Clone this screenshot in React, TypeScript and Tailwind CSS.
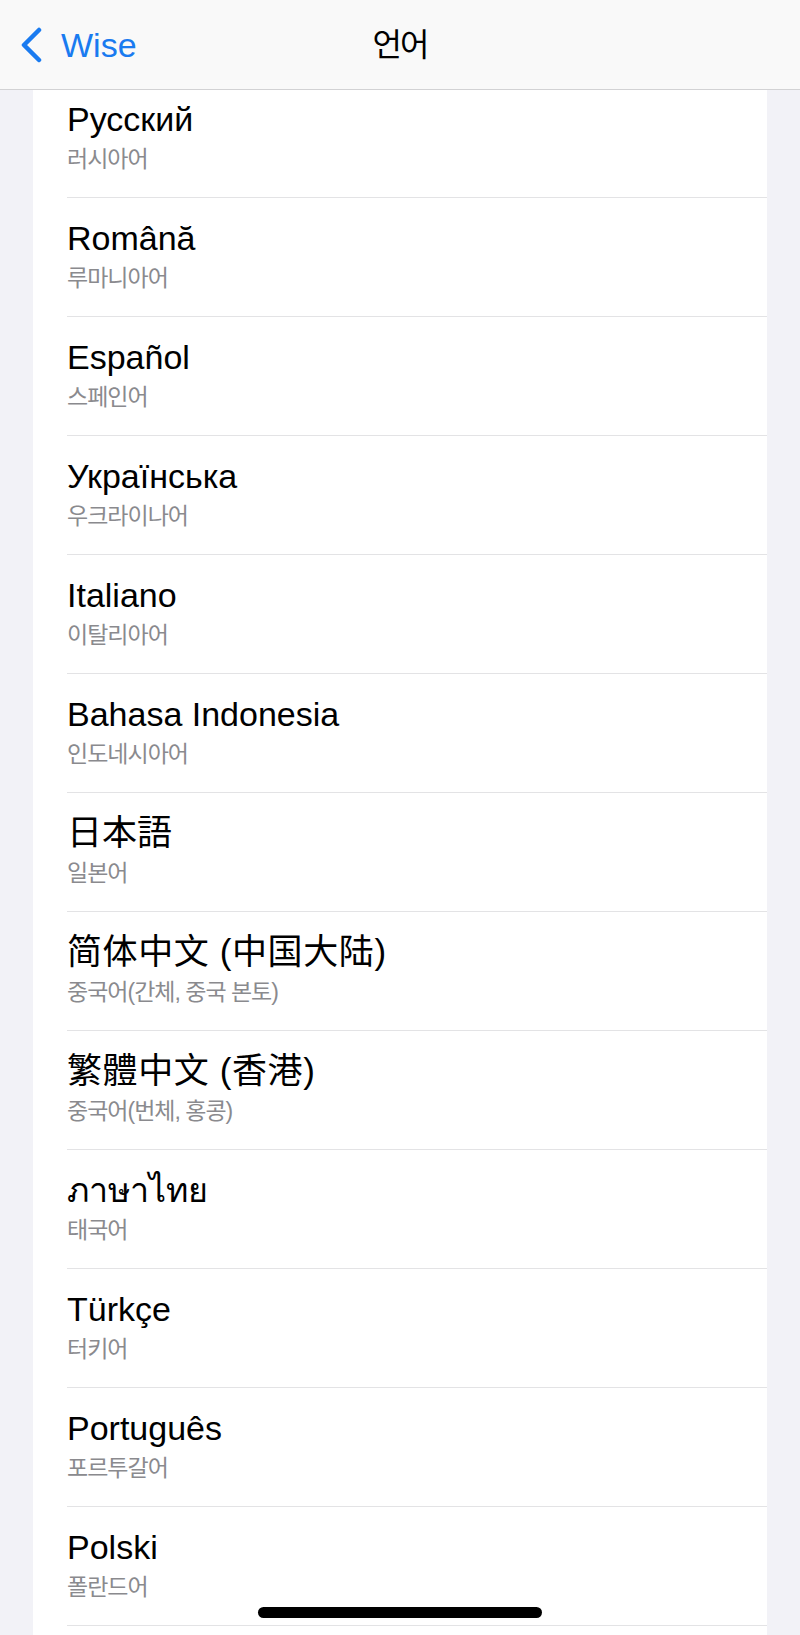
import React from "react";

const LANGUAGES = [
  { name: "Русский", label: "러시아어" },
  { name: "Română", label: "루마니아어" },
  { name: "Español", label: "스페인어" },
  { name: "Українська", label: "우크라이나어" },
  { name: "Italiano", label: "이탈리아어" },
  { name: "Bahasa Indonesia", label: "인도네시아어" },
  { name: "日本語", label: "일본어", cjk: "jp" },
  { name: "简体中文 (中国大陆)", label: "중국어(간체, 중국 본토)", cjk: "sc" },
  { name: "繁體中文 (香港)", label: "중국어(번체, 홍콩)", cjk: "tc" },
  { name: "ภาษาไทย", label: "태국어" },
  { name: "Türkçe", label: "터키어" },
  { name: "Português", label: "포르투갈어" },
  { name: "Polski", label: "폴란드어" },
  { name: "", label: "" },
];

const titleFont: Record<string, string> = {
  jp: "font-['Liberation_Sans','Noto_Sans_CJK_JP',sans-serif] text-[35px]",
  sc: "font-['Liberation_Sans','Noto_Sans_CJK_SC',sans-serif] text-[35px] tracking-[0.6px]",
  tc: "font-['Liberation_Sans','Noto_Sans_CJK_TC',sans-serif] text-[35px] tracking-[0.6px]",
};

export default function App() {
  return (
    <div className="w-[800px] h-[1635px] bg-[#f2f2f7] relative overflow-hidden font-['Liberation_Sans','Noto_Sans_CJK_KR',sans-serif]">
      {/* Nav bar */}
      <header className="h-[90px] bg-[#f9f9f9] border-b border-[#d2d2d4] grid grid-cols-[1fr_auto_1fr] items-center relative z-10">
        <div className="flex items-center pl-[19px] gap-[18px] text-[#1a7bf0]">
          <svg width="24" height="36" viewBox="0 0 24 36" fill="none">
            <path d="M20 3 L5 18 L20 33" stroke="currentColor" strokeWidth="4.5" strokeLinecap="round" strokeLinejoin="round" />
          </svg>
          <span className="text-[34px] leading-none">Wise</span>
        </div>
        <h1 className="text-[32px] font-normal text-black tracking-[-2px] leading-none">언어</h1>
        <div />
      </header>

      {/* List */}
      <main className="h-[1545px] overflow-hidden">
        <div className="-mt-[11px] mx-[33px] bg-white pl-[34px]">
          {LANGUAGES.map((lang, i) => (
            <div key={i} className="h-[119px] border-b border-[#e3e3e5] flex flex-col justify-center">
              <div
                className={
                  "h-[40px] leading-[40px] text-black whitespace-nowrap " +
                  (lang.cjk ? titleFont[lang.cjk] : "text-[34px]")
                }
              >
                {lang.name}
              </div>
              <div className="mt-[2px] h-[36px] leading-[36px] text-[23px] tracking-[-1px] text-[#8a8a8e] whitespace-nowrap">
                {lang.label}
              </div>
            </div>
          ))}
        </div>
      </main>

      {/* Home indicator */}
      <div className="absolute bottom-[17px] left-1/2 -translate-x-1/2 w-[284px] h-[11px] rounded-full bg-black" />
    </div>
  );
}
